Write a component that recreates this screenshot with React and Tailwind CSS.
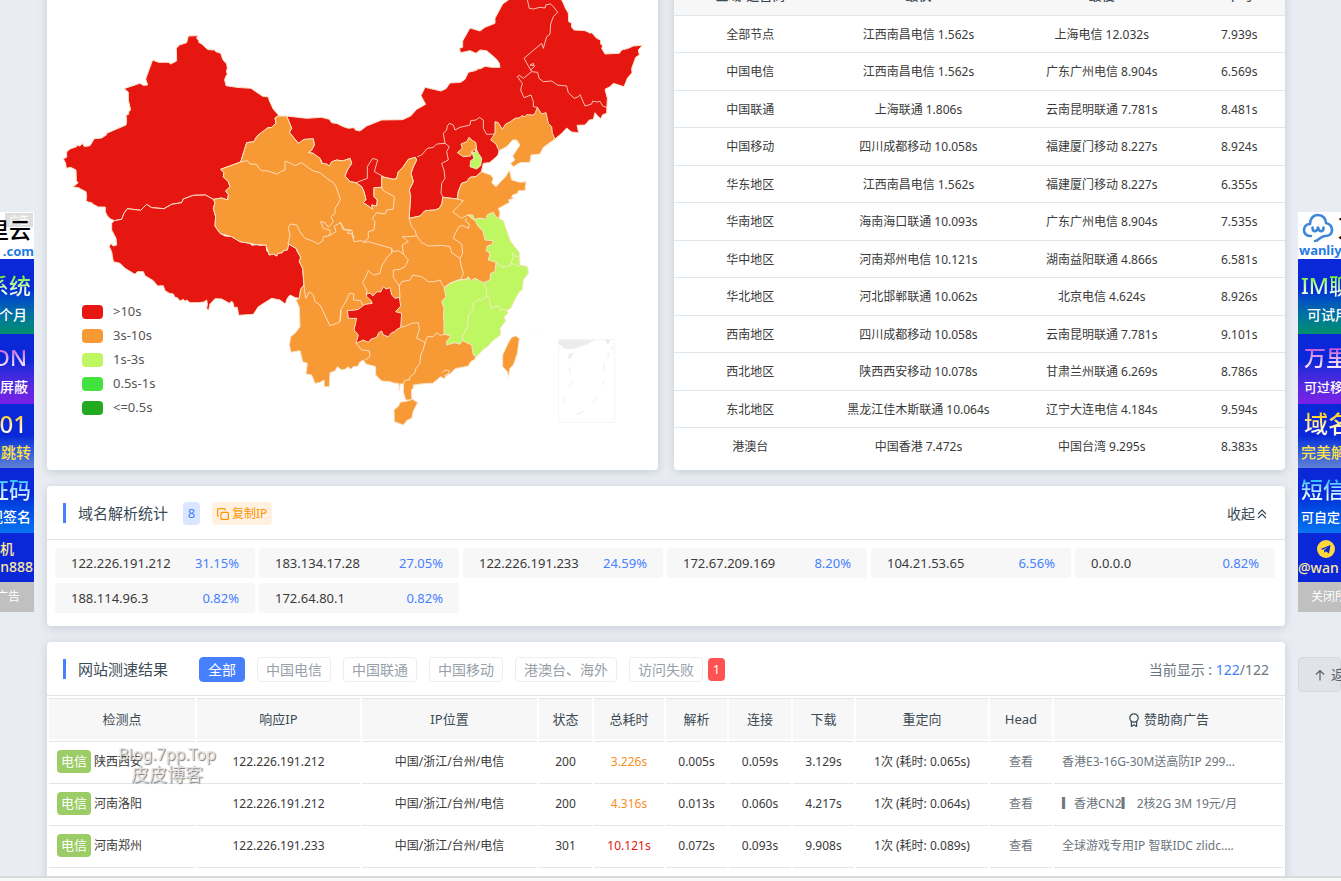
import React from 'react';

const speedRows = [
  ['全部节点', '江西南昌电信 1.562s', '上海电信 12.032s', '7.939s'],
  ['中国电信', '江西南昌电信 1.562s', '广东广州电信 8.904s', '6.569s'],
  ['中国联通', '上海联通 1.806s', '云南昆明联通 7.781s', '8.481s'],
  ['中国移动', '四川成都移动 10.058s', '福建厦门移动 8.227s', '8.924s'],
  ['华东地区', '江西南昌电信 1.562s', '福建厦门移动 8.227s', '6.355s'],
  ['华南地区', '海南海口联通 10.093s', '广东广州电信 8.904s', '7.535s'],
  ['华中地区', '河南郑州电信 10.121s', '湖南益阳联通 4.866s', '6.581s'],
  ['华北地区', '河北邯郸联通 10.062s', '北京电信 4.624s', '8.926s'],
  ['西南地区', '四川成都移动 10.058s', '云南昆明联通 7.781s', '9.101s'],
  ['西北地区', '陕西西安移动 10.078s', '甘肃兰州联通 6.269s', '8.786s'],
  ['东北地区', '黑龙江佳木斯联通 10.064s', '辽宁大连电信 4.184s', '9.594s'],
  ['港澳台', '中国香港 7.472s', '中国台湾 9.295s', '8.383s'],
];

const ips = [
  ['122.226.191.212', '31.15%'],
  ['183.134.17.28', '27.05%'],
  ['122.226.191.233', '24.59%'],
  ['172.67.209.169', '8.20%'],
  ['104.21.53.65', '6.56%'],
  ['0.0.0.0', '0.82%'],
  ['188.114.96.3', '0.82%'],
  ['172.64.80.1', '0.82%'],
];

const results = [
  { node: '陕西西安', ip: '122.226.191.212', status: '200', total: '3.226s', tone: 'text-[#f7901e]', dns: '0.005s', conn: '0.059s', down: '3.129s', redir: '1次 (耗时: 0.065s)', ad: '香港E3-16G-30M送高防IP 299...' },
  { node: '河南洛阳', ip: '122.226.191.212', status: '200', total: '4.316s', tone: 'text-[#f7901e]', dns: '0.013s', conn: '0.060s', down: '4.217s', redir: '1次 (耗时: 0.064s)', ad: '▎香港CN2▎ 2核2G 3M 19元/月' },
  { node: '河南郑州', ip: '122.226.191.233', status: '301', total: '10.121s', tone: 'text-[#e61610]', dns: '0.072s', conn: '0.093s', down: '9.908s', redir: '1次 (耗时: 0.089s)', ad: '全球游戏专用IP 智联IDC zlidc....' },
];

const legend = [
  ['bg-[#e61610]', '>10s'],
  ['bg-[#f79a35]', '3s-10s'],
  ['bg-[#bef761]', '1s-3s'],
  ['bg-[#44e23e]', '0.5s-1s'],
  ['bg-[#23aa1e]', '<=0.5s'],
];

const RED = '#e61610';
const ORANGE = '#f79a35';
const GREEN = '#bef761';

const regions = [
  // Xinjiang
  [RED, '565,108 593,107 590,115 597,122 596,127 605,132 618,144 624,149 643,150 648,155 662,160 669,180 680,192 682,205 679,214 682,222 676,232 674,240 678,257 710,262 753,265 772,278 788,289 805,291 808,302 820,328 836,346 825,354 828,370 815,382 802,384 802,390 785,397 770,410 762,425 740,428 722,486 662,508 672,518 670,530 685,545 690,560 677,573 685,583 683,600 665,594 640,598 616,585 580,586 550,597 545,608 515,613 492,626 455,623 440,613 422,631 382,626 372,640 365,658 343,662 332,657 322,648 316,635 316,621 295,621 280,613 275,608 265,606 258,602 260,590 258,575 242,567 238,564 218,560 228,554 234,548 229,542 228,510 212,502 199,505 197,490 190,476 200,472 200,455 212,446 230,440 228,435 240,438 247,430 253,440 270,437 283,416 305,414 320,404 320,400 350,387 378,375 380,360 378,346 386,343 386,335 392,330 385,300 385,276 372,266 420,250 430,256 443,255 437,237 458,180 475,187 505,187 512,192 530,183 529,145 538,135 560,128'],
  // Tibet
  [RED, '343,662 365,658 372,640 382,626 422,631 440,613 455,623 492,626 515,613 545,608 550,597 580,586 616,585 640,598 645,608 640,625 647,650 645,678 660,700 675,708 695,710 720,725 750,730 755,736 770,734 780,736 798,735 800,752 805,758 808,765 820,762 830,768 833,760 847,758 850,752 862,750 866,732 888,745 892,755 902,772 898,785 908,805 912,855 902,868 898,895 886,893 870,885 862,895 856,912 845,904 840,900 815,895 775,920 760,943 716,946 712,922 702,922 700,910 695,903 688,910 680,905 665,897 645,896 630,912 626,931 620,926 622,912 620,900 612,906 595,908 570,908 560,900 555,904 550,898 540,903 532,893 525,892 520,882 508,880 495,872 490,857 473,858 460,842 435,827 430,815 412,815 405,823 375,805 360,790 340,785 335,755 328,740 332,730 340,738 350,735 348,715 335,690 335,670'],
  // Northern provinces
  [RED, '860,348 920,355 965,352 988,358 995,368 1012,371 1030,380 1045,385 1063,383 1066,390 1080,393 1100,378 1145,360 1208,359 1232,348 1250,328 1277,313 1263,287 1275,262 1323,273 1338,266 1350,249 1382,247 1395,238 1405,217 1430,211 1432,207 1442,206 1455,199 1475,202 1500,202 1498,190 1490,178 1460,152 1440,150 1428,160 1410,152 1382,158 1378,145 1388,142 1388,123 1410,84 1440,93 1455,82 1485,70 1485,55 1508,12 1525,0 1560,-30 1660,-30 1685,0 1690,10 1695,22 1705,40 1706,65 1715,70 1714,80 1722,90 1755,92 1772,100 1775,98 1790,115 1802,120 1802,132 1808,138 1805,145 1815,162 1858,160 1865,150 1885,145 1900,138 1927,136 1915,150 1918,165 1907,172 1895,205 1896,218 1882,235 1872,260 1840,250 1830,260 1815,268 1822,295 1820,340 1808,344 1802,356 1793,348 1785,338 1780,358 1768,360 1755,375 1731,376 1736,398 1715,396 1700,384 1685,400 1665,417 1612,380 1500,420 1497,452 1494,465 1485,474 1468,488 1450,490 1444,515 1428,530 1410,532 1400,545 1385,550 1375,575 1372,597 1328,592 1326,610 1318,625 1305,630 1275,632 1260,648 1227,655 1232,590 1228,570 1240,545 1233,520 1240,500 1250,480 1246,472 1225,478 1210,500 1195,515 1190,535 1180,538 1145,530 1145,562 1122,563 1122,590 1132,600 1130,618 1115,615 1118,628 1105,618 1090,608 1098,600 1092,575 1085,560 1068,548 1050,545 1035,528 1042,510 1055,490 1050,475 1028,483 1010,480 995,488 988,498 980,492 970,495 960,475 945,468 940,460 925,458 935,450 943,435 940,418 925,418 895,430 868,397 875,385'],
  // Inland and southern provinces
  [ORANGE, '860,348 875,385 868,397 895,430 912,418 940,416 943,435 935,450 925,458 940,460 960,475 965,490 980,492 988,498 995,485 1010,480 1028,483 1050,475 1055,490 1042,510 1035,528 1050,545 1068,548 1085,560 1092,575 1098,600 1090,608 1105,618 1118,628 1115,615 1130,618 1132,600 1122,590 1122,563 1145,562 1145,530 1180,538 1190,535 1195,515 1210,500 1225,478 1246,472 1250,480 1240,500 1233,520 1240,545 1228,570 1232,590 1227,655 1260,648 1275,632 1305,630 1318,625 1326,610 1328,592 1372,597 1375,575 1385,550 1400,545 1410,532 1428,530 1444,515 1472,525 1480,535 1475,548 1488,560 1502,545 1517,530 1528,510 1535,540 1560,547 1578,545 1575,572 1555,572 1553,580 1538,585 1535,592 1543,594 1525,600 1530,606 1505,620 1495,625 1500,638 1490,700 1500,800 1440,1000 1425,1078 1412,1085 1405,1098 1365,1106 1352,1120 1338,1128 1333,1136 1322,1130 1310,1140 1298,1150 1280,1150 1240,1155 1240,1165 1234,1170 1236,1200 1217,1200 1210,1175 1210,1152 1200,1152 1198,1172 1196,1150 1185,1150 1170,1145 1145,1143 1127,1125 1127,1100 1098,1092 1090,1080 1078,1088 1075,1098 1060,1100 1052,1108 1045,1100 1035,1108 1025,1110 1012,1100 1005,1113 990,1118 988,1160 973,1160 972,1140 958,1148 945,1150 935,1125 918,1122 922,1090 908,1085 900,1052 873,1057 868,1035 872,1010 885,1000 900,980 898,922 888,900 898,895 902,868 912,855 908,805 898,785 902,772 888,745 866,732 862,750 850,752 847,758 833,760 830,768 820,762 808,765 798,735 770,734 750,730 720,725 695,710 660,700 645,678 647,650 640,625 645,608 640,598 665,594 683,600 685,583 677,573 690,560 685,545 670,530 672,518 662,508 722,486 740,428 762,425 770,410 785,397 802,384 815,382 828,370 825,354 836,348'],
  // Liaoning
  [ORANGE, '1485,365 1495,368 1507,388 1517,372 1530,366 1545,355 1560,353 1565,347 1575,350 1580,344 1600,345 1606,338 1612,322 1625,342 1638,338 1645,370 1655,380 1657,400 1665,417 1630,442 1620,462 1593,465 1590,487 1560,488 1540,500 1532,490 1545,480 1538,468 1560,435 1550,420 1538,420 1520,440 1497,452 1488,432 1472,420 1485,400'],
  // Beijing
  [ORANGE, '1407,412 1418,422 1427,427 1430,445 1415,455 1412,468 1390,470 1372,458 1387,445 1383,432 1400,425'],
  // Tianjin
  [GREEN, '1428,445 1435,460 1445,475 1442,497 1430,507 1410,500 1412,482 1422,475 1415,455 1425,458'],
  // Eastern coast
  [GREEN, '1403,645 1418,645 1422,658 1440,654 1457,658 1462,644 1480,637 1488,650 1510,662 1530,720 1540,735 1558,757 1560,795 1583,800 1585,820 1570,840 1567,870 1558,875 1545,898 1532,925 1522,930 1524,940 1512,950 1517,963 1500,985 1502,1005 1475,1025 1465,1038 1450,1048 1430,1070 1420,1065 1415,1035 1387,1022 1380,1033 1365,1028 1340,1035 1340,1025 1352,1008 1332,1002 1332,960 1330,950 1332,925 1325,905 1338,890 1332,865 1350,850 1375,840 1398,838 1405,830 1412,842 1425,835 1450,848 1470,840 1472,820 1485,815 1488,787 1465,780 1470,760 1458,752 1462,738 1478,732 1478,722 1455,720 1452,705 1448,692 1435,680 1425,662'],
  // Guizhou
  [RED, '1100,880 1112,880 1118,888 1132,875 1142,876 1150,860 1158,867 1170,863 1175,885 1185,895 1198,892 1202,918 1187,935 1205,940 1202,982 1188,990 1185,995 1175,998 1165,1010 1150,1005 1145,993 1136,998 1130,1012 1112,1018 1105,1027 1090,1020 1068,1030 1075,1005 1062,990 1070,955 1045,955 1042,932 1065,930 1075,928 1095,913 1117,910 1112,900 1100,890'],
  // Hainan
  [ORANGE, '1200,1207 1222,1203 1238,1198 1253,1208 1240,1233 1235,1255 1222,1260 1210,1275 1183,1265 1182,1230 1196,1218'],
  // Taiwan
  [ORANGE, '1547,1008 1558,1015 1552,1060 1540,1095 1530,1105 1525,1130 1522,1115 1508,1100 1508,1065 1525,1028 1535,1012'],
];

const borders = [
  '722,486 742,482 750,492 770,493 775,502 785,513 800,512 815,517 832,522 842,515 855,510 855,483 872,490 885,497 905,488 925,503 940,513 960,518 980,535 1000,548 1008,560 1021,597 1012,615 1005,625 1005,640 993,650 1000,665 985,682 975,668 962,665 970,685 990,690 990,702 985,708 970,710 968,722 955,732 935,722 915,715 900,695 890,675 872,672 865,682 870,705 864,732',
  '985,708 1000,700 1008,695 1003,678 1022,668 1028,688 1050,692 1042,700 1055,700 1062,725 1085,722 1092,727 1105,725 1140,735 1175,745 1178,755 1195,752 1210,762',
  '1020,665 1035,690 1055,690 1062,715',
  '1090,727 1105,715 1105,695 1122,690 1125,665 1117,655 1130,638 1155,642 1160,630 1180,627 1183,590 1150,572 1145,562',
  '1068,548 1102,535 1102,500 1118,475 1133,480 1123,515 1150,530',
  '1227,655 1235,680 1245,690 1250,708 1220,710 1207,710 1225,725 1207,735 1210,762',
  '1250,708 1265,728 1285,738 1325,736 1350,740 1355,758 1380,775 1388,760 1385,732 1375,725 1360,715 1365,702 1377,680 1388,676 1405,685 1408,672 1395,662 1400,655',
  '1372,597 1390,602 1375,618 1358,635 1385,655 1403,645',
  '1380,775 1382,792 1390,820 1382,838',
  '1405,835 1398,838 1375,840 1350,850 1332,862 1325,850 1320,840 1305,845 1285,845 1265,830 1238,825 1230,840 1205,845 1198,858 1180,832 1180,810 1200,808 1215,800 1225,780 1210,762',
  '1175,745 1175,760 1162,770 1145,798 1140,820 1120,825 1105,812 1100,825 1088,848 1100,870 1100,885',
  '1198,858 1200,895',
  '1202,982 1218,978 1235,970 1255,968 1258,988 1250,1015 1265,1022 1275,1028 1282,1010 1300,1010 1310,998 1320,1006 1335,1003',
  '1275,1028 1270,1048 1262,1065 1260,1090 1248,1105 1245,1118 1230,1130 1228,1140 1215,1140 1210,1152',
  '1068,1030 1075,1038 1085,1050 1108,1052 1110,1070 1095,1080',
  '912,855 915,880 918,895 928,875 940,885 945,905 960,915 990,977 1010,970 1020,965 1022,930 1040,900 1048,880 1062,882 1060,900 1082,902 1088,915',
  '1020,965 1024,930',
  '1450,848 1460,870 1460,890 1445,900 1435,900 1420,910 1420,928 1405,945 1403,980 1390,1005 1387,1022',
  '1460,890 1468,895 1472,925 1485,920 1495,918 1500,930 1512,928 1527,940',
  '1488,787 1505,800 1520,800 1535,790 1550,798 1560,798',
  '1530,798 1540,770 1535,758 1550,770 1560,768',
  '1580,-10 1588,25 1600,27 1620,22 1635,24 1638,14 1652,12 1662,22 1673,37 1660,50 1652,72 1650,103 1640,110 1630,145 1625,130 1572,175 1592,210 1603,200 1600,190 1590,195 1602,197',
  '1552,230 1558,226 1570,235 1595,215 1613,217 1617,235 1630,245 1655,243 1672,255 1700,258 1705,278 1723,295 1735,290 1740,284 1755,318 1775,312 1778,303 1790,306 1800,304 1808,318 1822,323',
  '1592,210 1595,215',
  '1552,230 1567,250 1562,270 1572,293 1593,285 1600,305 1600,320 1612,322',
  '1485,402 1460,403 1450,385 1450,360 1438,352 1428,360 1412,362 1410,375 1380,382 1365,390 1360,375 1348,370 1342,378 1340,390 1330,400 1335,430 1310,432 1300,442 1282,445 1265,465 1252,470',
  '1335,430 1348,440 1340,455 1345,480 1325,490 1332,510 1335,535 1325,550 1323,580 1330,592',
  '1327,1118 1335,1110 1348,1112 1346,1120 1332,1128',
];

function ChinaMap() {
  return (
    <svg viewBox="141 0 1833 1410" className="block w-full" role="img" aria-label="map">
      <g stroke="#fbe3c8" strokeWidth="3" strokeLinejoin="round">
        {regions.map(([fill, points], i) => (
          <polygon key={i} points={points} fill={fill} />
        ))}
      </g>
      <g fill="none" stroke="#fdebd8" strokeWidth="3" strokeOpacity="0.8" strokeLinejoin="round">
        {borders.map((points, i) => (
          <polyline key={i} points={points} />
        ))}
      </g>
      <rect x="1675" y="1018" width="169" height="249" fill="none" stroke="#f5f5f5" strokeWidth="3" />
      <g fill="#ececec">
        <path d="M1674 1020H1785L1762 1032 1720 1047H1695L1674 1030ZM1815 1020h16l-7 14ZM1706 1062l16-4-10 18h-8ZM1604 988l6-4-2 6Z" />
      </g>
      <g fill="none" stroke="#ededed" strokeWidth="3">
        <path d="M1706 1102l6 18M1704 1160l14-13M1690 1192l3 16M1777 1208l14-18M1805 1154l8-12M1813 1092l-2 22M1821 1075l8-16M1834 1048l6-12M1731 1242l20-8" />
      </g>
    </svg>
  );
}

const card = 'rounded bg-white shadow-[0_2px_10px_rgba(60,75,100,0.2)]';
const cardHeader = 'flex h-[54px] items-center border-b border-[#e0e3e8] pt-0.5 pr-4 pl-4';
const cardTitle = 'flex items-center gap-3 pb-0.5 text-[15px] text-[#3b4a54]';
const th = 'h-[41px] border-t border-[#e0e6ed] bg-[#f7f7f7] p-0 pt-0.5 text-[13px] font-normal text-[#3b4a54]';
const td = 'h-10 border-t border-[#e0e6ed] p-0 text-center';
const tab = 'h-[25px] rounded-sm border border-[#eceef1] px-2 text-sm leading-5 text-[#98a0a8]';

function Panel({ top, bottom, bg, topClass, bottomClass, side }) {
  return (
    <a href="#ad" className={`flex flex-col justify-center whitespace-nowrap ${side} ${bg}`}>
      <span className={`bg-clip-text font-medium text-transparent ${topClass}`}>{top}</span>
      <span className={`leading-6 font-medium ${bottomClass}`}>{bottom}</span>
    </a>
  );
}

const bg1 = 'h-[75px] bg-linear-to-b from-[#0a28d8] from-40% to-[#0a8f6c]';
const bg2 = 'h-[70px] bg-linear-to-b from-[#0a28d8] from-40% to-[#7a1fe6]';
const bg3 = 'h-[64px] bg-linear-to-b from-[#0a28d8] from-50% to-[#5f7fd6]';
const bg4 = 'h-[65px] bg-linear-to-b from-[#0a28d8] from-40% to-[#0a74f0]';
const lime = 'bg-linear-to-b from-[#6ff01e] from-25% to-[#f4fff0] to-75%';
const pink = 'bg-linear-to-b from-[#c24fd8] from-25% to-[#f7e6ff] to-75%';
const gold = 'bg-linear-to-b from-[#ffd21f] from-25% to-[#fffbe8] to-75%';
const cyan = 'bg-linear-to-b from-[#2fc0ff] from-25% to-[#e8fbff] to-75%';

function LeftAd() {
  const side = 'items-end pr-[3px]';
  return (
    <aside className="flex w-[34px] shrink-0 flex-col overflow-hidden pt-[212px]">
      <div className="relative flex h-[47px] flex-col items-end bg-white whitespace-nowrap">
        <span className="absolute top-px right-px bg-[#c8c8c8]/60 px-1 text-[10px] leading-[14px] text-white">广告</span>
        <span className="relative pr-[3px] text-[22px] leading-[34px] font-medium text-black">里云</span>
        <span className="text-[13px] leading-[10px] font-bold text-[#1f7be6]">.com</span>
      </div>
      <Panel side={side} bg={bg1} top="系统" topClass={`text-[22px] leading-9 ${lime}`} bottom="个月" bottomClass="pr-1 text-[14px] text-white" />
      <Panel side={side} bg={bg2} top="DN" topClass={`pr-1 text-[22px] leading-9 ${pink}`} bottom="分屏蔽" bottomClass="pr-[3px] text-[14px] text-white" />
      <Panel side={side} bg={bg3} top="301" topClass={`pr-1 text-[24px] leading-8 ${gold}`} bottom="跳转" bottomClass="text-[15px] text-[#ffe14a]" />
      <Panel side={side} bg={bg4} top="证码" topClass={`text-[22px] leading-8 ${cyan}`} bottom="规签名" bottomClass="text-[14px] text-white" />
      <a href="#contact" className="flex h-[49px] flex-col items-end bg-[#0a28d8] pt-2 whitespace-nowrap text-[#ffe99a]">
        <span className="pr-5 text-[14px] leading-4 font-medium">飞机</span>
        <span className="pr-px text-[14px] leading-5 font-medium">n888</span>
      </a>
      <button className="flex h-[30px] items-center justify-end bg-[#c0c0c0] pr-3.5 text-xs whitespace-nowrap text-white">关闭所有广告</button>
    </aside>
  );
}

function RightAd() {
  const side = 'items-start pl-[3px]';
  return (
    <aside className="flex w-[43px] shrink-0 flex-col overflow-hidden pt-[212px]">
      <div className="flex h-[47px] flex-col bg-white whitespace-nowrap">
        <div className="flex h-8 items-center gap-1 pl-1">
          <svg viewBox="0 0 32 30" className="h-[30px] w-8 shrink-0" fill="none" stroke="#3f86d8" strokeWidth="2.6" strokeLinecap="round" strokeLinejoin="round">
            <path d="M9 23H8C4 23 2 20 2 17c0-3 2-6 6-6 0-5 3-9 8-9s8 4 8 8c4 1 6 4 6 7 0 4-3 6-7 6-4 0-7 5-10 5" />
            <path d="M10.500 14.500c0 5 4.500 5 5.500 0 1 5 5.500 5 5.500 0" />
          </svg>
          <span className="text-[24px] font-medium text-black">万</span>
        </div>
        <span className="pl-px text-[13px] leading-3 font-bold text-[#1f7be6]">wanliyun</span>
      </div>
      <Panel side={side} bg={bg1} top="IM聊天" topClass={`text-[22px] leading-9 ${lime}`} bottom="可试用" bottomClass="pl-1.5 text-[14px] text-white" />
      <Panel side={side} bg={bg2} top="万里云" topClass={`pl-[3px] text-[22px] leading-9 ${pink}`} bottom="可过移动" bottomClass="pl-[3px] text-[13px] text-white" />
      <Panel side={side} bg={bg3} top="域名" topClass={`pl-[3px] text-[24px] leading-8 ${gold}`} bottom="完美解" bottomClass="text-[15px] text-[#ffe14a]" />
      <Panel side={side} bg={bg4} top="短信验" topClass={`text-[22px] leading-8 ${cyan}`} bottom="可自定义" bottomClass="text-[13px] text-white" />
      <a href="#contact" className="flex h-[49px] flex-col bg-[#0a28d8] pt-[7px] whitespace-nowrap text-[#ffe99a]">
        <svg viewBox="0 0 18 18" className="ml-[19px] h-[18px] w-[18px] shrink-0">
          <circle cx="9" cy="9" r="9" fill="#ffd83a" />
          <path d="M3.500 9 13.500 5 12 13.500 8.800 11.200 7.300 12.800 7 10.300 11 7 5.800 9.800Z" fill="#0a28d8" />
        </svg>
        <span className="text-[14px] leading-5 font-medium">@wan</span>
      </a>
      <button className="flex h-[30px] items-center bg-[#c0c0c0] pl-[13px] text-xs whitespace-nowrap text-white">关闭所有</button>
      <button className="mt-[45px] flex h-[35px] items-center gap-1.5 rounded-sm border border-[#d5d9df] bg-[#e0e3e8] pl-4 text-sm whitespace-nowrap text-[#5c6066]">
        <svg viewBox="0 0 10 12" className="h-3 w-[10px] shrink-0" fill="none" stroke="currentColor" strokeWidth="1.2">
          <path d="M5 11.500V1.500M1 5.500l4-4 4 4" />
        </svg>
        返回顶部
      </button>
    </aside>
  );
}

export default function App() {
  return (
    <div className="flex h-screen justify-between overflow-hidden bg-[#e9edf2] font-['Noto_Sans','Noto_Sans_CJK_SC',sans-serif] text-xs text-[#3a3a3a]">
      <LeftAd />
      <main className="-mt-6 mr-[13px] ml-[13px] flex min-w-0 flex-1 flex-col gap-4">
        <div className="grid grid-cols-2 gap-4">
          <section className={`${card} relative pt-6`}>
            <ChinaMap />
            <ul className="absolute bottom-[50px] left-[35px]">
              {legend.map(([color, label]) => (
                <li key={label} className="flex h-6 items-center gap-[10px] text-[13px] text-[#555]">
                  <span className={`h-[14px] w-[21px] rounded ${color}`} />
                  {label}
                </li>
              ))}
            </ul>
          </section>
          <section className={`${card} overflow-hidden`}>
            <table className="w-full table-fixed text-center">
              <colgroup>
                <col className="w-1/4" />
                <col className="w-[30%]" />
                <col className="w-[30%]" />
                <col className="w-[15%]" />
              </colgroup>
              <thead>
                <tr className="h-[39px] bg-[#f7f7f7] text-[13px] text-[#3b4a54]">
                  <th className="p-0 font-medium">区域/运营商</th>
                  <th className="p-0 font-medium">最快</th>
                  <th className="p-0 font-medium">最慢</th>
                  <th className="p-0 font-medium">平均</th>
                </tr>
              </thead>
              <tbody>
                {speedRows.map((row) => (
                  <tr key={row[0]} className="border-t border-[#e0e6ed] odd:h-[37px] even:h-[38px]">
                    {row.map((cell, i) => (
                      <td key={i} className="p-0 pt-0.5">{cell}</td>
                    ))}
                  </tr>
                ))}
              </tbody>
            </table>
          </section>
        </div>

        <section className={card}>
          <header className={cardHeader}>
            <h2 className={cardTitle}>
              <span className="h-5 w-[3px] bg-[#4680ff]" />
              域名解析统计
            </h2>
            <span className="ml-[15px] flex h-[23px] w-[17px] items-center justify-center rounded bg-[#dae5ff] text-[13px] text-[#4680ff]">8</span>
            <button className="ml-3 flex h-[23px] items-center gap-[3px] rounded bg-[#fff0df] px-[5px] text-xs text-[#ff9500]">
              <svg viewBox="0 0 12 12" className="h-3 w-3" fill="none" stroke="currentColor" strokeWidth="1.2" strokeLinejoin="round">
                <rect x="4" y="4.400" width="7.400" height="7" rx="1" />
                <path d="M2 8.200H1.600a1 1 0 0 1-1-1V1.600a1 1 0 0 1 1-1h5.600a1 1 0 0 1 1 1V2.400" />
              </svg>
              复制IP
            </button>
            <button className="ml-auto flex items-center gap-0.5 pr-0.5 text-sm text-[#3b4a54]">
              收起
              <svg viewBox="0 0 10 10" className="h-[10px] w-[10px]" fill="none" stroke="currentColor" strokeWidth="1.2">
                <path d="M1 5l4-4 4 4M1 9l4-4 4 4" />
              </svg>
            </button>
          </header>
          <ul className="flex flex-wrap gap-x-1 gap-y-[5px] pt-2 pr-2 pb-[13px] pl-2">
            {ips.map(([ip, pct]) => (
              <li key={ip} className="flex h-[30px] w-[200px] items-center justify-between rounded-[3px] bg-[#f7f7f7] px-4 pt-0.5 text-[13px]">
                {ip}
                <span className="text-[#4680ff]">{pct}</span>
              </li>
            ))}
          </ul>
        </section>

        <section className={`${card} relative`}>
          <header className={cardHeader}>
            <h2 className={cardTitle}>
              <span className="h-5 w-[3px] bg-[#4680ff]" />
              网站测速结果
            </h2>
            <nav className="ml-[31px] flex items-center gap-3">
              <button className="h-[25px] rounded-sm border border-[#4680ff] bg-[#4680ff] px-2 text-sm leading-5 text-white">全部</button>
              <button className={tab}>中国电信</button>
              <button className={tab}>中国联通</button>
              <button className={tab}>中国移动</button>
              <button className={tab}>港澳台、海外</button>
              <button className={tab}>访问失败</button>
            </nav>
            <span className="ml-[5px] flex h-[23px] w-[17px] items-center justify-center rounded bg-[#ff5252] text-[13px] text-white">1</span>
            <p className="ml-auto text-sm text-[#6c757d]">
              当前显示 : <span className="text-[#4680ff]">122</span>/122
            </p>
          </header>
          <table className="w-full table-fixed border-separate border-spacing-[2px]">
            <colgroup>
              <col className="w-[146px]" />
              <col className="w-[163px]" />
              <col className="w-[175px]" />
              <col className="w-[53px]" />
              <col className="w-[70px]" />
              <col className="w-[61px]" />
              <col className="w-[62px]" />
              <col className="w-[61px]" />
              <col className="w-[132px]" />
              <col className="w-[62px]" />
              <col className="w-[229px]" />
            </colgroup>
            <thead>
              <tr>
                {['检测点', '响应IP', 'IP位置', '状态', '总耗时', '解析', '连接', '下载', '重定向', 'Head'].map((h) => (
                  <th key={h} className={th}>{h}</th>
                ))}
                <th className={th}>
                  <span className="flex items-center justify-center gap-1">
                    <svg viewBox="0 0 12 14" className="h-[14px] w-3" fill="none" stroke="currentColor" strokeWidth="1.2" strokeLinejoin="round">
                      <circle cx="6" cy="5" r="4.200" />
                      <path d="M3.400 8.600v4.800L6 11.800l2.600 1.600V8.600" />
                    </svg>
                    赞助商广告
                  </span>
                </th>
              </tr>
            </thead>
            <tbody>
              {results.map((r) => (
                <tr key={r.node}>
                  <td className={td}>
                    <span className="flex items-center gap-[3px] pl-2">
                      <span className="flex h-[23px] w-[34px] items-center justify-center rounded bg-[#9ccc65] text-[13px] text-white">电信</span>
                      {r.node}
                    </span>
                  </td>
                  <td className={td}>{r.ip}</td>
                  <td className={td}>中国/浙江/台州/电信</td>
                  <td className={td}>{r.status}</td>
                  <td className={`${td} ${r.tone}`}>{r.total}</td>
                  <td className={td}>{r.dns}</td>
                  <td className={td}>{r.conn}</td>
                  <td className={td}>{r.down}</td>
                  <td className={td}>{r.redir}</td>
                  <td className={td}><a href="#head" className="text-[#6c757d]">查看</a></td>
                  <td className={td}><a href="#sponsor" className="block pl-2 text-left whitespace-nowrap text-[#6c757d]">{r.ad}</a></td>
                </tr>
              ))}
              <tr>
                {Array.from({ length: 11 }, (_, i) => (
                  <td key={i} className={td} />
                ))}
              </tr>
            </tbody>
          </table>
          <div className="pointer-events-none absolute top-[101px] left-[69px] w-[102px] text-center whitespace-nowrap text-[#e4e4e4] [text-shadow:1px_1px_1px_#777]">
            <p className="text-[16px] leading-[22px]">Blog.7pp.Top</p>
            <p className="text-[18px] leading-[18px]">皮皮博客</p>
          </div>
        </section>
      </main>
      <RightAd />
      <div className="fixed inset-x-0 bottom-0 h-[5px] border-t-2 border-[#d9dadc] bg-[#f8f8f8]" />
    </div>
  );
}
